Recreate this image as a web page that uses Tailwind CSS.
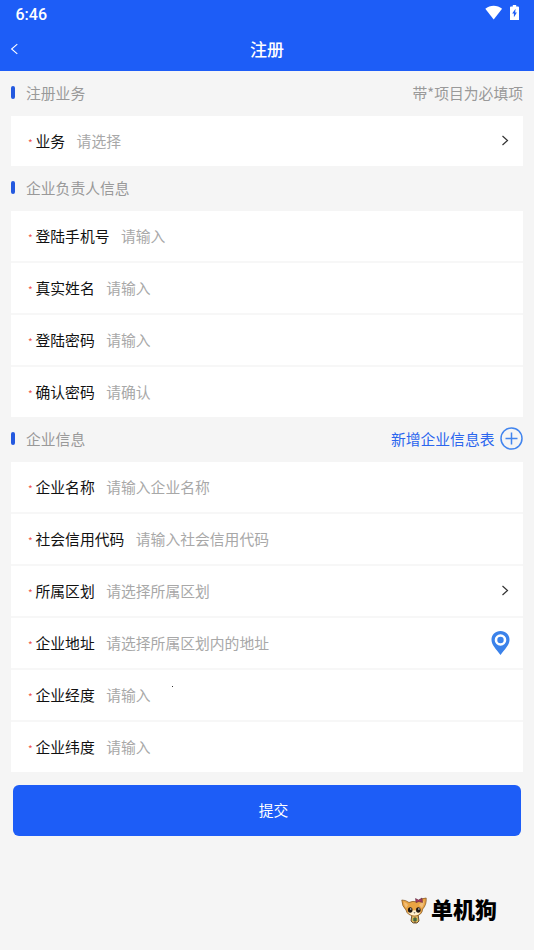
<!DOCTYPE html>
<html lang="zh-CN">
<head>
<meta charset="utf-8">
<title>注册</title>
<script src="https://cdn.jsdelivr.net/npm/@tailwindcss/browser@4"></script>
</head>
<body class="w-[534px] h-[950px] overflow-hidden bg-[#f5f5f5] flex flex-col font-['Noto_Sans_CJK_SC',sans-serif] text-[14.8px] leading-5 text-[#111]">
<header class="h-[71px] shrink-0 bg-[#1d5df7] text-white flex flex-col">
  <div class="h-7 flex items-center justify-between pl-[15.5px] pr-[15px]">
    <span class="font-['Roboto',sans-serif] font-medium text-[16px] leading-7 pt-[1px]">6:46</span>
    <div class="flex items-center gap-[7px] -mt-[3px]">
      <svg class="w-[18px] h-[15px]" viewBox="0 0 18 15" fill="#fff"><path d="M.3 3.800C5.100-.2 12.300-.2 17.100 3.800L8.700 14.500Z"/></svg>
      <svg class="w-[9px] h-[15px]" viewBox="0 0 9 15"><path d="M2.800 0h3.400v1.500H8q1 0 1 1V15H0V2.500q0-1 1-1h1.800Z" fill="#fff"/><path d="M5.500 3.800 2.200 8.500h1.700v3.700l3-4.800H5.200Z" fill="#1d5df7"/></svg>
    </div>
  </div>
  <div class="h-[43px] grid grid-cols-[1fr_auto_1fr] items-center px-[10px]">
    <svg class="w-[9px] h-3 mb-[1px]" viewBox="0 0 9 12" fill="none" stroke="#fff" stroke-width="1.1"><path d="M7.300 1.200 1.600 6l5.700 4.800"/></svg>
    <h1 class="text-[17px] font-medium pb-[2px]">注册</h1>
    <span></span>
  </div>
</header>
<main class="px-[11px]">
  <div class="h-[45px] pb-[2px] flex items-center text-[#999]">
    <i class="w-1 h-[13px] rounded-sm bg-[#2459df] mr-[11px]"></i><span>注册业务</span><span class="ml-auto">带*项目为必填项</span>
  </div>
  <section class="bg-white">
    <div class="h-[50px] flex items-center pl-[17px] pr-[14px]"><b class="w-[7.500px] pt-1 text-[10px] font-normal text-[#f0564d]">*</b><span>业务</span><span class="ml-[11.500px] text-[#a8a8a8]">请选择</span><svg class="ml-auto w-2 h-[11px] mb-[1px]" viewBox="0 0 8 11" fill="none" stroke="#333" stroke-width="1.200"><path d="m1.500 1 5 4.500-5 4.500"/></svg></div>
  </section>
  <div class="h-[45px] pb-[2px] flex items-center text-[#999]">
    <i class="w-1 h-[13px] rounded-sm bg-[#2459df] mr-[11px]"></i><span>企业负责人信息</span>
  </div>
  <section class="bg-white">
    <div class="h-[52px] border-b-2 border-[#f7f7f7] flex items-center pl-[17px] pr-[14px]"><b class="w-[7.500px] pt-1 text-[10px] font-normal text-[#f0564d]">*</b><span>登陆手机号</span><span class="ml-[11.500px] text-[#a8a8a8]">请输入</span></div>
    <div class="h-[52px] border-b-2 border-[#f7f7f7] flex items-center pl-[17px] pr-[14px]"><b class="w-[7.500px] pt-1 text-[10px] font-normal text-[#f0564d]">*</b><span>真实姓名</span><span class="ml-[11.500px] text-[#a8a8a8]">请输入</span></div>
    <div class="h-[52px] border-b-2 border-[#f7f7f7] flex items-center pl-[17px] pr-[14px]"><b class="w-[7.500px] pt-1 text-[10px] font-normal text-[#f0564d]">*</b><span>登陆密码</span><span class="ml-[11.500px] text-[#a8a8a8]">请输入</span></div>
    <div class="h-[50px] flex items-center pl-[17px] pr-[14px]"><b class="w-[7.500px] pt-1 text-[10px] font-normal text-[#f0564d]">*</b><span>确认密码</span><span class="ml-[11.500px] text-[#a8a8a8]">请确认</span></div>
  </section>
  <div class="h-[45px] pb-[2px] flex items-center text-[#999]">
    <i class="w-1 h-[13px] rounded-sm bg-[#2459df] mr-[11px]"></i><span>企业信息</span>
    <span class="ml-auto text-[#2b66ee]">新增企业信息表</span>
    <svg class="ml-[5.500px] w-[23px] h-[23px]" viewBox="0 0 23 23" fill="none" stroke="#4285ee" stroke-width="1.500"><circle cx="11.500" cy="11.500" r="10.500"/><path d="M5.500 11.500h12M11.500 5.500v12"/></svg>
  </div>
  <section class="bg-white">
    <div class="h-[52px] border-b-2 border-[#f7f7f7] flex items-center pl-[17px] pr-[14px]"><b class="w-[7.500px] pt-1 text-[10px] font-normal text-[#f0564d]">*</b><span>企业名称</span><span class="ml-[11.500px] text-[#a8a8a8]">请输入企业名称</span></div>
    <div class="h-[52px] border-b-2 border-[#f7f7f7] flex items-center pl-[17px] pr-[14px]"><b class="w-[7.500px] pt-1 text-[10px] font-normal text-[#f0564d]">*</b><span>社会信用代码</span><span class="ml-[11.500px] text-[#a8a8a8]">请输入社会信用代码</span></div>
    <div class="h-[52px] border-b-2 border-[#f7f7f7] flex items-center pl-[17px] pr-[14px]"><b class="w-[7.500px] pt-1 text-[10px] font-normal text-[#f0564d]">*</b><span>所属区划</span><span class="ml-[11.500px] text-[#a8a8a8]">请选择所属区划</span><svg class="ml-auto w-2 h-[11px] mb-[1px]" viewBox="0 0 8 11" fill="none" stroke="#333" stroke-width="1.200"><path d="m1.500 1 5 4.500-5 4.500"/></svg></div>
    <div class="h-[52px] border-b-2 border-[#f7f7f7] flex items-center pl-[17px] pr-[13px]"><b class="w-[7.500px] pt-1 text-[10px] font-normal text-[#f0564d]">*</b><span>企业地址</span><span class="ml-[11.500px] text-[#a8a8a8]">请选择所属区划内的地址</span><svg class="ml-auto w-[19px] h-6" viewBox="0 0 19 24"><path d="M9.500 0C4.300 0 .5 3.900.5 8.800c0 5.400 5 9.700 9 15.200 4-5.500 9-9.800 9-15.200C18.500 3.900 14.700 0 9.500 0Z" fill="#3b82ea"/><circle cx="9.500" cy="9" r="4.500" fill="#3b82ea" stroke="#fff" stroke-width="2.600"/></svg></div>
    <div class="relative h-[52px] border-b-2 border-[#f7f7f7] flex items-center pl-[17px] pr-[14px]"><b class="w-[7.500px] pt-1 text-[10px] font-normal text-[#f0564d]">*</b><span>企业经度</span><span class="ml-[11.500px] text-[#a8a8a8]">请输入</span><i class="absolute left-[161px] top-4 w-px h-px bg-[#333]"></i></div>
    <div class="h-[50px] flex items-center pl-[17px] pr-[14px]"><b class="w-[7.500px] pt-1 text-[10px] font-normal text-[#f0564d]">*</b><span>企业纬度</span><span class="ml-[11.500px] text-[#a8a8a8]">请输入</span></div>
  </section>
  <button class="block w-[508px] h-[51px] mt-[13px] ml-[2px] pl-[13px] pb-[2px] rounded-md bg-[#1d5df7] text-white">提交</button>
</main>
<footer class="mt-[56px] pl-[401px] flex items-center gap-1">
  <svg class="w-[26px] h-[28px]" viewBox="0 0 26 28">
    <path d="M11 18h6l1 7-2 2h-4l-2-2Z" fill="#d9b45c" stroke="#4e351c" stroke-width=".8"/>
    <path d="M.8 4q4.200 0 7.200 2.500 4-2 8-.5Q20 2 25.200 2q.5 7-3.500 11-.5 6.500-8 7Q6 19.500 5 14 .8 10 .8 4Z" fill="#e9a443" stroke="#80521f" stroke-width=".7"/>
    <path d="M3 6q3 1 4 3l-2 3Q3 9 3 6Zm20-1q-3 1-5 4l3 3q2-3 2-7Z" fill="#f2be78"/>
    <path d="M7 15.500q6-2.500 12.500 0-1 4-6 4-5.500-.3-6.500-4Z" fill="#fff0ce"/>
    <ellipse cx="9.200" cy="14" rx="2.300" ry="2.700" fill="#1f1712"/><ellipse cx="17.300" cy="14" rx="2.300" ry="2.700" fill="#1f1712"/>
    <circle cx="9.800" cy="13" r=".7" fill="#fff"/><circle cx="17.900" cy="13" r=".7" fill="#fff"/>
    <path d="m12.500 16.500 1 1 1-1Z" fill="#1f1712"/>
    <path d="m14.500 2.500 3 1.500L21 2l.5 4.500L18 5.500l-3 1Z" fill="#a23b5c" stroke="#552039" stroke-width=".5"/>
    <path d="M12 22h4v3h-4Z" fill="#5e8b51"/><path d="M14 21v6" stroke="#3f2b1c" stroke-width=".8"/>
  </svg>
  <strong class="text-[22px] leading-8 pb-1 font-black text-black">单机狗</strong>
</footer>
</body>
</html>
